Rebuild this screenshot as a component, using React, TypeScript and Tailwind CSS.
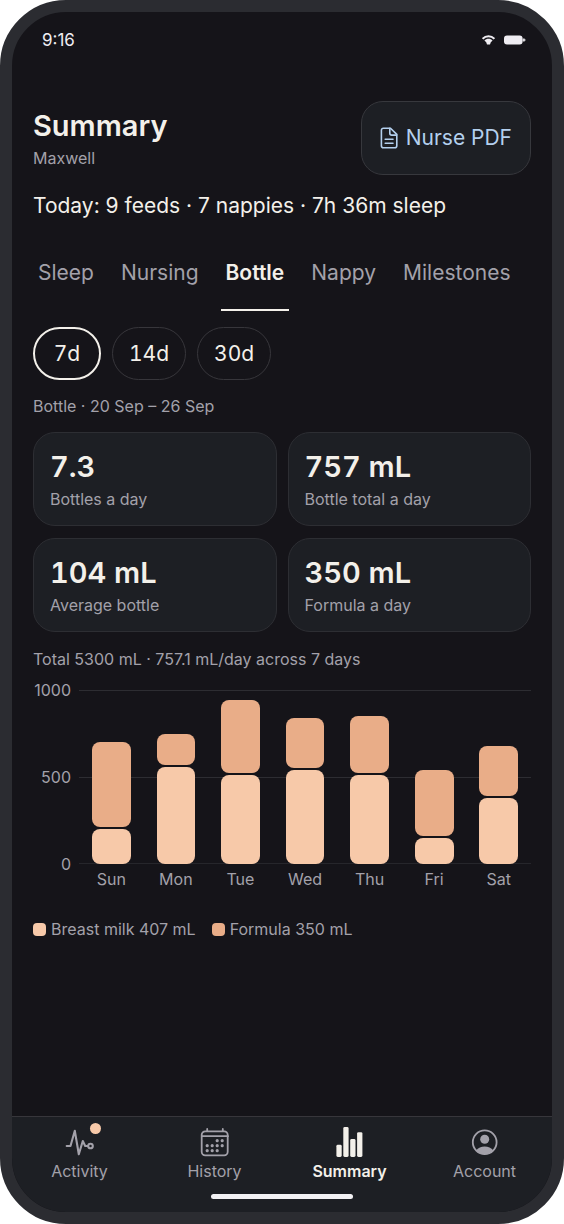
import React, { useState } from 'react'

interface DayIntake {
  day: string
  milk: number
  formula: number
}

const days: DayIntake[] = [
  { day: 'Sun', milk: 200, formula: 500 },
  { day: 'Mon', milk: 560, formula: 190 },
  { day: 'Tue', milk: 510, formula: 430 },
  { day: 'Wed', milk: 540, formula: 300 },
  { day: 'Thu', milk: 510, formula: 340 },
  { day: 'Fri', milk: 150, formula: 390 },
  { day: 'Sat', milk: 380, formula: 300 }
]

const stats = [
  { value: '7.3', label: 'Bottles a day' },
  { value: '757 mL', label: 'Bottle total a day' },
  { value: '104 mL', label: 'Average bottle' },
  { value: '350 mL', label: 'Formula a day' }
]

const tabs = ['Sleep', 'Nursing', 'Bottle', 'Nappy', 'Milestones']
const ranges = ['7d', '14d', '30d']
const CHART_MAX = 1000

const WifiIcon = () => (
  <svg className="h-[10px] w-[13px]" viewBox="0 0 13 10" fill="none" aria-hidden="true">
    <path d="M0.6 3.7C3.8 0.3 9.2 0.3 12.4 3.7" stroke="currentColor" strokeWidth="2" />
    <path d="M2.4 5.6C4.6 3.2 8.4 3.2 10.6 5.6L8.8 7.2L8 9.4H5L4.2 7.2Z" fill="currentColor" />
  </svg>
)

const BatteryIcon = () => (
  <svg className="h-[10px] w-[22px]" viewBox="0 0 22 10" fill="currentColor" aria-hidden="true">
    <rect x="0" y="0.5" width="18.6" height="9" rx="3" />
    <path d="M18.6 4.2H19.4V3.2H20.4V4.2H21.4V5.8H20.4V6.8H19.4V5.8H18.6Z" />
  </svg>
)

const DocumentIcon = () => (
  <svg className="h-6 w-[18px]" viewBox="0 0 18 24" fill="none" stroke="currentColor" strokeWidth="1.6" strokeLinecap="round" strokeLinejoin="round" aria-hidden="true">
    <path d="M10.5 2.2H3.4C2.2 2.2 1.4 3 1.4 4.2V19.8C1.4 21 2.2 21.8 3.4 21.8H14.8C16 21.8 16.8 21 16.8 19.8V8.4Z" />
    <path d="M9.8 2.4V7.2C9.8 8.4 10.5 9.1 11.7 9.1H16.6M5.2 13.2H13M5.2 17.2H13" />
  </svg>
)

const ActivityIcon = () => (
  <svg className="h-[30px] w-[30px]" viewBox="0 0 30 30" fill="none" stroke="currentColor" strokeWidth="2.1" strokeLinecap="round" strokeLinejoin="round" aria-hidden="true">
    <path d="M1.7 19H5.5L9.8 3.7L13.8 27.2L17.8 14L20.2 19H23" />
    <circle cx="25.5" cy="19" r="2.3" />
  </svg>
)

const HistoryIcon = () => (
  <svg className="h-[30px] w-[30px]" viewBox="0 0 30 30" fill="none" stroke="currentColor" strokeWidth="1.8" strokeLinecap="round" aria-hidden="true">
    <rect x="1.7" y="4.3" width="26" height="24" rx="3.5" />
    <path d="M2 9.2H28M7.2 2V4M22.8 2V4" />
    <g fill="currentColor" stroke="none">
      <circle cx="17.2" cy="13.7" r="1.6" />
      <circle cx="22.2" cy="13.7" r="1.6" />
      <circle cx="7.2" cy="18.7" r="1.6" />
      <circle cx="12.2" cy="18.7" r="1.6" />
      <circle cx="17.2" cy="18.7" r="1.6" />
      <circle cx="22.2" cy="18.7" r="1.6" />
      <circle cx="7.2" cy="23.7" r="1.6" />
      <circle cx="12.2" cy="23.7" r="1.6" />
      <circle cx="17.2" cy="23.7" r="1.6" />
    </g>
  </svg>
)

const SummaryIcon = () => (
  <svg className="h-[30px] w-[30px]" viewBox="0 0 30 30" fill="currentColor" aria-hidden="true">
    <rect x="1.4" y="17.8" width="5.3" height="12.2" rx="1.4" />
    <rect x="8.3" y="0" width="5.3" height="30" rx="1.4" />
    <rect x="15.2" y="12" width="5.3" height="18" rx="1.4" />
    <rect x="22.1" y="5.2" width="5.3" height="24.8" rx="1.4" />
  </svg>
)

const AccountIcon = () => (
  <svg className="h-[30px] w-[30px]" viewBox="0 0 30 30" fill="currentColor" aria-hidden="true">
    <circle cx="14.7" cy="15.2" r="11.9" fill="none" stroke="currentColor" strokeWidth="1.8" />
    <circle cx="14.7" cy="12.3" r="4.5" />
    <path d="M6 23.4C8.2 20.8 11.2 19.5 14.7 19.5S21.2 20.8 23.4 23.4A12 12 0 0 1 6 23.4Z" />
  </svg>
)

const navItems = [
  { label: 'Activity', icon: ActivityIcon, badge: true },
  { label: 'History', icon: HistoryIcon, badge: false },
  { label: 'Summary', icon: SummaryIcon, badge: false },
  { label: 'Account', icon: AccountIcon, badge: false }
]

const IntakeChart: React.FC<{ data: DayIntake[] }> = ({ data }) => (
  <div className="mt-[21px] flex">
    {/* Y axis */}
    <div className="-mt-[10px] flex h-[194px] w-[38px] flex-col justify-between text-right text-base leading-5">
      <span>1000</span>
      <span>500</span>
      <span>0</span>
    </div>

    <div className="ml-2 flex-1">
      <div className="relative h-[174px]">
        <div className="absolute inset-0 flex flex-col justify-between">
          <div className="h-px bg-[#2d2d32]" />
          <div className="h-px bg-[#2d2d32]" />
          <div className="h-px bg-[#26262b]" />
        </div>
        <div className="relative flex h-full">
          {data.map(d => (
            <div key={d.day} className="flex h-full flex-1 flex-col items-center justify-end">
              <div className="w-3/5 pb-0.5" style={{ height: `${(d.formula / CHART_MAX) * 100}%` }}>
                <div className="h-full rounded-lg bg-[#e9ad88]" />
              </div>
              <div className="w-3/5 rounded-lg bg-[#f7c9a9]" style={{ height: `${(d.milk / CHART_MAX) * 100}%` }} />
            </div>
          ))}
        </div>
      </div>
      <div className="mt-[5px] flex text-base leading-5">
        {data.map(d => (
          <span key={d.day} className="flex-1 text-center">{d.day}</span>
        ))}
      </div>
    </div>
  </div>
)

export default function App() {
  const [tab, setTab] = useState('Bottle')
  const [range, setRange] = useState('7d')
  const [page, setPage] = useState('Summary')

  return (
    <div className="flex min-h-screen flex-col overflow-hidden rounded-[66px] border-[12px] border-[#2b2c31] bg-[#151419] font-['Inter',sans-serif] text-[#f3f0ea]">
      {/* Status bar */}
      <div className="flex h-14 items-center justify-between pl-[30px] pr-[26px] text-[#efedf2]">
        <span className="text-[17px] leading-5">9:16</span>
        <div className="flex items-center gap-[9px]">
          <WifiIcon />
          <BatteryIcon />
        </div>
      </div>

      <main className="mt-[33px] px-[21px] text-[#a3a1aa]">
        <header className="flex items-center justify-between">
          <div>
            <h1 className="text-[29px] font-semibold leading-9 text-[#f3f0ea]">Summary</h1>
            <p className="mt-1 text-base leading-5">Maxwell</p>
          </div>
          <button type="button" className="flex h-[74px] items-center gap-2 rounded-[22px] border border-[#37383d] bg-[#1d1f24] px-[18px] text-[21px] leading-7 text-[#b4d0ee]">
            <DocumentIcon />
            Nurse PDF
          </button>
        </header>

        <p className="mt-[17px] text-[21px] leading-7 text-[#f3f0ea]">Today: 9 feeds · 7 nappies · 7h 36m sleep</p>

        {/* Tabs */}
        <div role="tablist" className="mt-[15px] flex gap-[17px] text-[21px] leading-7">
          {tabs.map(t => (
            <button
              key={t}
              type="button"
              role="tab"
              aria-selected={t === tab}
              onClick={() => setTab(t)}
              className={`h-[76px] border-y-2 border-t-transparent px-[5px] ${t === tab ? 'border-b-[#f3f0ea] font-semibold text-[#f3f0ea]' : 'border-b-transparent'}`}
            >
              {t}
            </button>
          ))}
        </div>

        {/* Range */}
        <div className="mt-4 flex gap-[11px] text-[21px] leading-7 tabular-nums text-[#f3f0ea]">
          {ranges.map(r => (
            <button
              key={r}
              type="button"
              aria-pressed={r === range}
              onClick={() => setRange(r)}
              className={`h-[53px] rounded-full px-4 ${r === range ? 'min-w-[68px] border-2 border-[#f3f0ea]' : 'border border-[#37363b]'}`}
            >
              {r}
            </button>
          ))}
        </div>

        <p className="mt-4 text-base leading-5">Bottle · 20 Sep – 26 Sep</p>

        <div className="mt-4 grid grid-cols-2 gap-x-[11px] gap-y-3">
          {stats.map(s => (
            <div key={s.label} className="rounded-[22px] border border-[#2d2e33] bg-[#1d1f24] p-4">
              <p className="text-[29px] font-semibold leading-9 tabular-nums text-[#f3f0ea]">{s.value}</p>
              <p className="mt-1 text-base leading-5">{s.label}</p>
            </div>
          ))}
        </div>

        <p className="mt-[17px] text-base leading-5">Total 5300 mL · 757.1 mL/day across 7 days</p>

        <IntakeChart data={days} />

        <div className="mt-[30px] flex gap-4 text-base leading-5">
          <span className="flex items-center gap-[5px]">
            <span className="size-[13px] rounded bg-[#f7c9a9]" />
            Breast milk 407 mL
          </span>
          <span className="flex items-center gap-[5px]">
            <span className="size-[13px] rounded bg-[#e9ad88]" />
            Formula 350 mL
          </span>
        </div>
      </main>

      <footer className="mt-auto border-t border-[#37363b] bg-[#1d1f24] pb-[13px] pt-[10px]">
        <nav className="grid grid-cols-4">
          {navItems.map(({ label, icon: Icon, badge }) => (
            <button
              key={label}
              type="button"
              onClick={() => setPage(label)}
              className={`flex flex-col items-center gap-1 text-base leading-5 ${label === page ? 'font-semibold text-[#f3f0ea]' : 'text-[#a3a1aa]'}`}
            >
              <span className="relative">
                <Icon />
                {badge && <span className="absolute -right-[6px] -top-1 size-[11px] rounded-full bg-[#f7c9a9]" />}
              </span>
              {label}
            </button>
          ))}
        </nav>
        <div className="mx-auto mt-[13px] h-[5px] w-[142px] rounded-full bg-[#f2f1f4]" />
      </footer>
    </div>
  )
}
